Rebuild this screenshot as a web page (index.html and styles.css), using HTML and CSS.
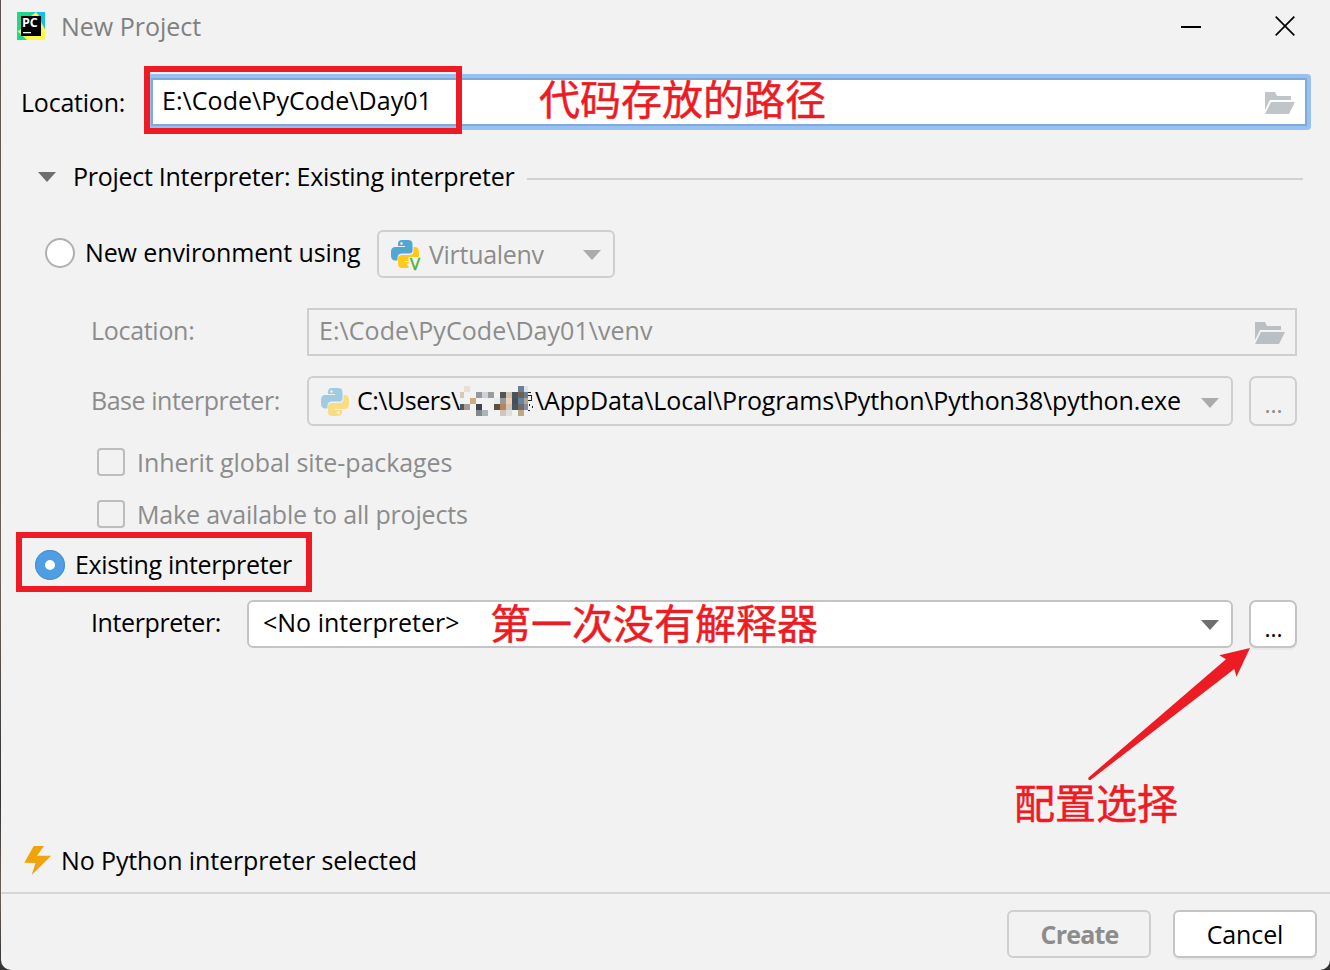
FILE: index.html
```html
<!DOCTYPE html>
<html lang="en">
<head>
<meta charset="utf-8">
<title>New Project</title>
<link rel="stylesheet" href="styles.css">
</head>
<body>
<svg class="defs" width="0" height="0" aria-hidden="true">
  <defs>
    <symbol id="folder" viewBox="0 0 30 22"><path d="M0 0H10L12 4H26V8H5L0 18ZM6 10H30L24 22H0Z"/></symbol>
    <symbol id="caret" viewBox="0 0 18 10"><path d="M0 0H18L9 10Z"/></symbol>
    <symbol id="python" viewBox="0 0 28 28">
      <path fill="#52a6d3" d="M11 0h6q4.500 0 4.500 4v6.500q0 3-3 3H11q-4.500 0-4.500 4.500v2.500H4.500q-4.500 0-4.500-5v-3.500q0-5 4.500-5H14v-1H7V4q0-4 4-4z"/>
      <path fill="#ffca1b" d="M17 28h-6q-4 0-4-4v-5.500q0-3.500 4-3.500h7q4.500 0 4.500-4.500V7h1q4.500 0 4.500 5v4q0 5-4.500 5H14v1h7v2q0 4-4 4z"/>
      <circle cx="10.500" cy="3.500" r="1.300" fill="#f2f2f2"/>
      <circle cx="17.500" cy="24.500" r="1.300" fill="#f2f2f2"/>
    </symbol>
  </defs>
</svg>
<div class="window">
  <header class="titlebar">
    <svg class="app-icon" width="28" height="28" viewBox="0 0 28 28">
      <rect width="28" height="28" fill="#21d789"/>
      <path d="M16 0H28V14L22 8Z" fill="#1abfe5"/>
      <path d="M14 4L19 0L22 4H24L28 17V28H6L0 20L4 17Z" fill="#fcf84a"/>
      <path d="M0 19L10 28H0Z" fill="#21d789"/>
      <path d="M22 0H28V17L24 10Z" fill="#1abfe5"/>
      <rect x="4" y="4" width="20" height="20"/>
      <rect x="6" y="20" width="8" height="1.300" fill="#fff"/>
      <text class="app-letters" x="4.900" y="15">PC</text>
    </svg>
    <span class="title">New Project</span>
    <svg class="minimize" width="20" height="2"><rect width="20" height="2"/></svg>
    <svg class="close" width="20" height="20" viewBox="0 0 20 20"><path d="M.7 .7L19.300 19.300M19.300 .7L.7 19.300"/></svg>
  </header>

  <div class="row location-row">
    <span class="label main-label">Location:</span>
    <div class="field focused"><span class="path">E:\Code\PyCode\Day01</span><svg class="folder" width="30" height="22"><use href="#folder"/></svg></div>
  </div>

  <div class="row section-row">
    <svg class="caret dark" width="18" height="10"><use href="#caret"/></svg>
    <span class="section-title">Project Interpreter: Existing interpreter</span>
    <i class="rule"></i>
  </div>

  <div class="row env-row">
    <i class="radio"></i>
    <span class="env-label">New environment using</span>
    <div class="combo env-combo">
      <svg class="env-icon" width="34" height="38" viewBox="0 0 34 38">
        <use href="#python" width="28" height="28"/>
        <path d="M17.500 17H30V32H17.500Z" fill="#f2f2f2"/>
        <text class="v-badge" x="19" y="30">V</text>
      </svg>
      <span class="env-name">Virtualenv</span>
      <svg class="caret light" width="18" height="10"><use href="#caret"/></svg>
    </div>
  </div>

  <div class="row venv-row">
    <span class="label sub-label short">Location:</span>
    <div class="field disabled"><span class="venv-path">E:\Code\PyCode\Day01\venv</span><svg class="folder" width="30" height="22"><use href="#folder"/></svg></div>
  </div>

  <div class="row base-row">
    <span class="label sub-label base">Base interpreter:</span>
    <div class="combo base-combo">
      <svg class="base-icon" width="28" height="28"><use href="#python"/></svg>
      <span class="user-path">C:\Users\</span>
      <svg class="mosaic" width="76" height="30" viewBox="0 0 76 30" shape-rendering="crispEdges">
        <path fill="#e8e0d8" d="M4 0h6v6H4z"/><path fill="#6a7f96" d="M58 0h6v6h-6z"/><path fill="#dde3ea" d="M64 0h4v6h-4z"/>
        <path fill="#d8c8b4" d="M0 6h4v6H0z"/><path fill="#97979b" d="M16 6h6v6h-6z"/><path fill="#cdd2d8" d="M22 6h6v6h-6z"/><path fill="#9b9b9b" d="M28 6h6v6h-6z"/><path fill="#555" d="M40 6h6v6h-6z"/><path fill="#cfc4ae" d="M46 6h6v6h-6z"/><path fill="#47545c" d="M52 6h6v6h-6z"/><path fill="#6c6350" d="M58 6h6v6h-6z"/><path fill="#68809b" d="M64 6h4v6h-4z"/>
        <path fill="#cfaa7c" d="M10 12h6v6h-6z"/><path fill="#e6ecee" d="M34 12h6v6h-6z"/><path fill="#999" d="M40 12h6v6h-6z"/><path fill="#ead2b0" d="M46 12h6v6h-6z"/><path fill="#454f5c" d="M52 12h6v6h-6z"/><path fill="#6482a6" d="M58 12h6v6h-6z"/><path fill="#b5a68e" d="M64 12h4v6h-4z"/>
        <path fill="#54565f" d="M0 18h4v6H0z"/><path fill="#a39b95" d="M4 18h6v6H4z"/><path fill="#42424c" d="M16 18h6v6h-6z"/><path fill="#5b4f40" d="M34 18h6v6h-6z"/><path fill="#b58657" d="M40 18h6v6h-6z"/><path fill="#d6c5b2" d="M46 18h6v6h-6z"/><path fill="#45565e" d="M52 18h6v6h-6z"/><path fill="#746a60" d="M58 18h6v6h-6z"/><path fill="#7e8fa6" d="M64 18h4v6h-4z"/>
        <path fill="#85888b" d="M16 24h6v6h-6z"/><path fill="#a9b6ba" d="M22 24h6v6h-6z"/><path fill="#cfc4c0" d="M40 24h6v6h-6z"/><path fill="#e0dde0" d="M46 24h6v6h-6z"/><path fill="#bba88a" d="M58 24h6v6h-6z"/>
        <path fill="none" stroke="#222" stroke-width="1" d="M68 6.500h3M68 9.500h4M71.500 9v6M68 14.500h4M69.500 18v2M68 24.500h2M72.500 20v2"/>
      </svg>
      <span class="exe-path">\AppData\Local\Programs\Python\Python38\python.exe</span>
      <svg class="caret light" width="18" height="10"><use href="#caret"/></svg>
    </div>
    <button class="more off">...</button>
  </div>

  <div class="row check-row first">
    <i class="check"></i><span class="inherit">Inherit global site-packages</span>
  </div>
  <div class="row check-row">
    <i class="check"></i><span class="make">Make available to all projects</span>
  </div>

  <div class="row existing-row">
    <i class="radio on"></i><span class="existing">Existing interpreter</span>
  </div>

  <div class="row interp-row">
    <span class="label sub-label interp">Interpreter:</span>
    <div class="combo interp-combo">
      <span class="none">&lt;No interpreter&gt;</span>
      <svg class="caret dark" width="18" height="10"><use href="#caret"/></svg>
    </div>
    <button class="more">...</button>
  </div>

  <div class="row status-row">
    <svg class="bolt" width="28" height="30" viewBox="0 0 28 30"><path d="M9.700 0H20L13 9.800H27.200L7.700 29L11.500 17L.3 16.700Z"/></svg>
    <span class="status">No Python interpreter selected</span>
  </div>

  <footer class="footer">
    <button class="btn create">Create</button>
    <button class="btn cancel">Cancel</button>
  </footer>

  <i class="mark mark-path"></i>
  <i class="mark mark-existing"></i>
  <span class="note note-path" lang="zh-CN">代码存放的路径</span>
  <span class="note note-interp" lang="zh-CN">第一次没有解释器</span>
  <span class="note note-config" lang="zh-CN">配置选择</span>
  <svg class="arrow" width="164" height="134" viewBox="0 0 164 134"><path d="M162 1L131.300 8.300L138 12.300L.5 130.500Q-.5 133.500 2.500 133L146.300 22L148.500 29.700Z"/></svg>
</div>
</body>
</html>
```
FILE: styles.css
```css
* { box-sizing: border-box; }
body {
  margin: 0;
  background: linear-gradient(#5c5450, #6b6058 60%, #333 82%, #6b6058 92%, #333);
  font: 25px/34px "Open Sans", "Noto Sans", "Noto Sans CJK SC", sans-serif;
  color: #000;
}
.defs { position: absolute; }
svg { display: block; flex: none; }
span { white-space: pre; flex: none; }
button { font: inherit; padding: 0; margin: 0; color: #000; }

.window {
  position: relative;
  height: 970px;
  margin-left: 1px;
  padding-right: 13px;
  background: #f2f2f2;
  border-radius: 0 0 10px 10px;
  overflow: hidden;
}
.row { display: flex; align-items: flex-start; }

/* Title bar */
.titlebar { display: flex; align-items: flex-start; height: 74px; padding-left: 16px; }
.app-icon { margin-top: 12px; }
.app-letters { font: bold 12.5px "Open Sans", sans-serif; fill: #fff; }
.title { margin: 9px auto 0 16px; color: #808080; }
.minimize { margin: 26px 74px 0 0; }
.close { margin: 16px 22px 0 0; fill: none; stroke: #000; stroke-width: 1.7; }

/* Fields */
.label { flex: none; }
.main-label { width: 126px; padding-top: 11px; letter-spacing: -.22px; }
.location-row { height: 85px; padding-left: 20px; margin-right: 5px; }
.field { display: flex; flex: 1; justify-content: space-between; }
.focused {
  height: 56px;
  margin-right: 1px;
  padding: 3px 12px 0 11px;
  background: #fff;
  border: 4px solid #97c1f1;
  border-radius: 4px;
  box-shadow: inset 0 0 0 2px #81a9da;
}
.path { padding-top: 2px; letter-spacing: .05px; }
.folder { fill: #bfc5c9; }
.focused .folder { margin-top: 11px; }

.caret.dark { fill: #6e6e6e; }
.caret.light { fill: #ababab; }

.section-row { height: 71px; padding-left: 37px; }
.section-row .caret { margin-top: 13px; }
.section-title { width: 454px; margin-left: 17px; letter-spacing: -.273px; }
.rule { flex: 1; height: 2px; margin: 19px 14px 0 0; background: #d1d1d1; }

.env-row { height: 78px; padding-left: 44px; }
.radio { flex: none; width: 30px; height: 30px; margin-top: 8px; border: 2px solid #b0b0b0; border-radius: 50%; background: #fff; }
.env-label { width: 292px; margin: 5px 0 0 10px; letter-spacing: -.12px; }
.combo { display: flex; align-items: flex-start; border: 2px solid #cfcfcf; border-radius: 6px; }
.combo .caret { margin-left: auto; }
.env-combo { width: 238px; height: 48px; padding: 0 12px; }
.env-icon { margin-top: 8px; }
.v-badge { font: 500 17px/20px "Open Sans", sans-serif; fill: #4fae32; stroke: #4fae32; stroke-width: .4px; }
.env-name { margin: 5px 0 0 4px; color: #8c8c8c; letter-spacing: -.3px; }
.env-combo .caret { margin-top: 18px; }

.venv-row { height: 68px; padding-left: 90px; margin-right: 20px; }
.sub-label { width: 216px; padding-top: 5px; color: #8c8c8c; }
.short { letter-spacing: -.3px; }
.disabled { height: 48px; padding: 1px 10px 0 10px; border: 2px solid #cfcfcf; color: #8c8c8c; }
.venv-path { padding-top: 2px; letter-spacing: .044px; }
.disabled .folder { margin-top: 11px; fill: #b9bfc3; }

.base-row { height: 69px; padding-left: 90px; }
.base { padding-top: 7px; letter-spacing: -.46px; }
.base-combo { width: 926px; height: 50px; padding: 0 12px; }
.base-icon { margin-top: 10px; opacity: .5; }
.user-path { width: 103px; margin: 5px 0 0 8px; letter-spacing: -.474px; }
.mosaic { margin-top: 8px; }
.exe-path { margin: 5px 0 0 -1px; letter-spacing: -.135px; }
.base-combo .caret { margin-top: 20px; }
.more {
  flex: none;
  width: 48px;
  height: 48px;
  margin-left: 16px;
  padding: 8px 0 0 1px;
  border: 2px solid #c4c4c4;
  border-radius: 7px;
  background: #fff;
  box-shadow: 0 2px 0 #e8e8e8;
  font-size: 23px;
  line-height: 34px;
}
.more.off { height: 50px; padding-top: 6px; border-color: #cfcfcf; background: transparent; box-shadow: none; color: #8c8c8c; }

/* Check boxes */
.check-row { height: 52px; padding-left: 96px; color: #8c8c8c; }
.check { width: 28px; height: 28px; margin-top: 3px; border: 2px solid #bdbdbd; border-radius: 4px; }
.inherit { margin-left: 12px; letter-spacing: -.076px; }
.make { margin-left: 12px; letter-spacing: -.18px; }

.existing-row { height: 51px; padding-left: 34px; }
.radio.on { margin-top: 1px; border: 10px solid #4f9de3; outline: 1px solid #488fd0; outline-offset: -1px; }
.existing { margin: -2px 0 0 10px; letter-spacing: -.323px; }

.interp-row { height: 243px; padding-left: 90px; }
.interp { width: 156px; color: #000; letter-spacing: -.4px; }
.interp-combo { width: 986px; height: 48px; padding: 0 12px; background: #fff; border-color: #c4c4c4; }
.none { margin: 3px 0 0 2px; letter-spacing: 0; }
.interp-combo .caret { margin-top: 18px; }

.status-row { height: 49px; padding-left: 23px; }
.bolt { margin-top: 3px; fill: #f0a30a; }
.status { margin-left: 9px; letter-spacing: -.12px; }

/* Footer */
.footer {
  display: flex;
  gap: 22px;
  justify-content: flex-end;
  height: 78px;
  margin-right: -13px;
  padding: 16px 13px 0 0;
  border-top: 2px solid #d6d6d6;
}
.btn { width: 144px; height: 48px; padding-bottom: 0; border: 2px solid #c4c4c4; border-radius: 6px; background: #fff; box-shadow: 0 2px 0 #e8e8e8; line-height: 34px; }
.create { padding-left: 1px; border-color: #cfcfcf; background: transparent; box-shadow: none; color: #8c8c8c; font-weight: bold; letter-spacing: -.8px; }
.cancel { letter-spacing: -.1px; }

/* Annotations laid over the dialog */
.mark { position: absolute; border: 6px solid #ed1c24; }
.mark-path { left: 143px; top: 66px; width: 318px; height: 68px; }
.mark-existing { left: 15px; top: 532px; width: 296px; height: 60px; }
.note { position: absolute; font: 400 41px/41px "Noto Sans CJK SC", sans-serif; color: #ed1c24; -webkit-text-stroke: .5px #ed1c24; }
.note-path { left: 538px; top: 77px; }
.note-interp { left: 489px; top: 601px; }
.note-config { left: 1013px; top: 781px; }
.arrow { position: absolute; left: 1087px; top: 647px; fill: #ed1c24; }
```
